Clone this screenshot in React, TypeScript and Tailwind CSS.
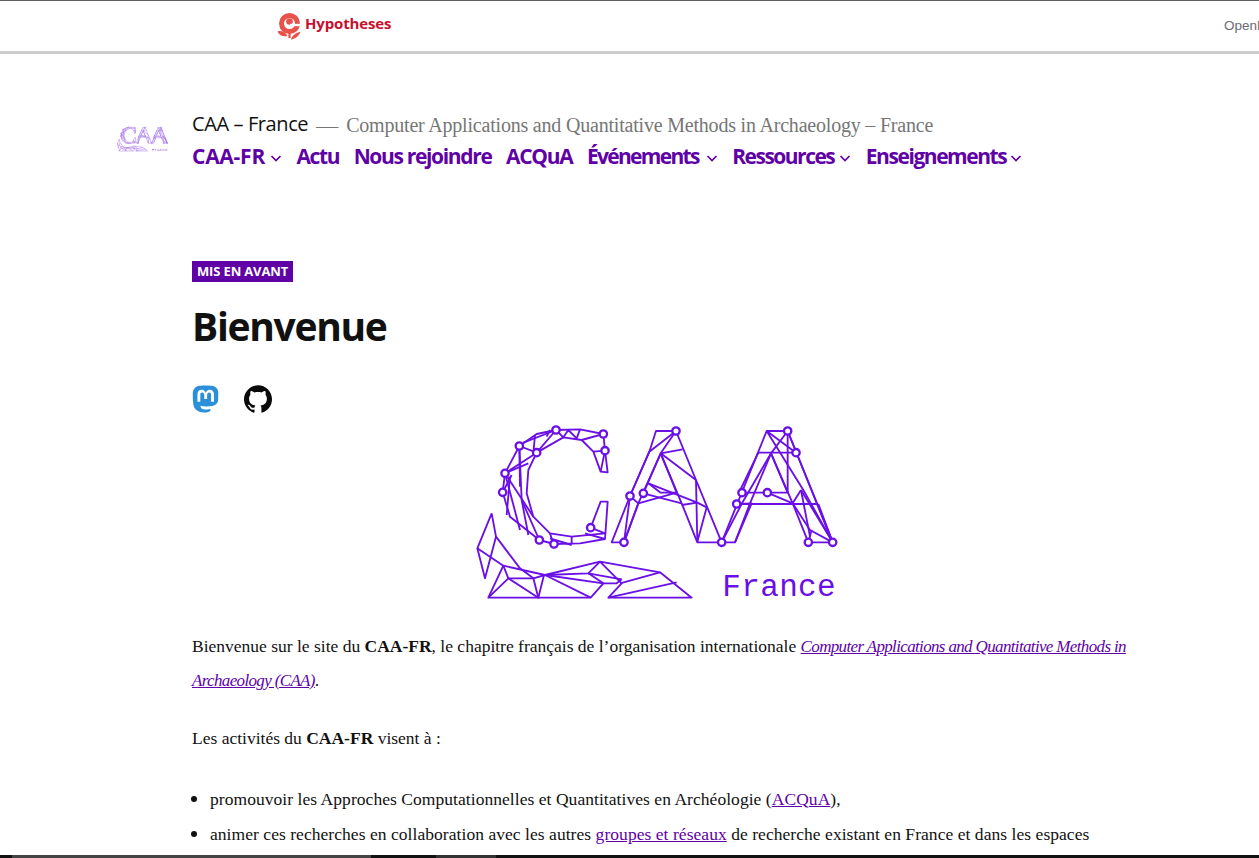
import React from "react";
import { SiMastodon, SiGithub } from "react-icons/si";

const lines: string[] = [
  // C outline
  "400,42 330,28 258,30 200,42 148,78 105,160 98,217 120,290 208,360 252,372 330,370 405,357 413,245 392,245 362,323",
  "400,42 405,92 413,157 392,155 370,95 335,60 280,52 200,98 175,150 170,220 190,290 240,340 305,350 405,340",
  "258,30 280,52 295,30 320,55 330,28", "258,30 200,98", "258,30 160,68", "230,50 240,30", "335,60 400,42", "370,95 405,92", "392,155 405,92",
  "148,78 200,98", "148,78 155,240 208,360", "195,45 190,100", "200,98 105,160", "105,160 175,130", "105,160 190,290", "105,160 150,330", "148,78 150,200",
  "98,217 125,165", "120,170 110,285", "155,240 175,345", "240,340 250,372", "240,355 305,375", "305,350 305,372", "345,340 405,357", "362,323 405,340",
  // lower shape
  "65,280 78,350 45,475 22,385 65,280", "22,385 100,437 225,465", "78,350 150,445", "100,437 55,533 362,533 400,490", "100,437 115,475 55,533",
  "115,475 205,533 222,465", "115,475 190,475 205,533", "150,445 190,475 225,465", "225,465 390,425 570,457 665,533 415,533 455,490 390,425",
  "225,465 355,460 390,425", "355,460 400,490 225,465", "225,465 362,533", "355,460 455,478", "400,490 440,490 455,478", "450,490 570,457", "415,533 620,487",
  // first A
  "462,367 425,367 480,228 538,95 558,33 618,33 678,180 755,367 682,367 635,250 572,100 505,250 462,367",
  "618,33 538,95 480,228 462,367", "618,33 572,100 520,220", "572,100 638,88", "572,100 678,180", "572,100 620,218", "535,190 572,218 620,218 505,250 480,228", "520,220 635,250",
  "535,190 682,248 635,255", "682,248 710,262 682,365", "678,180 682,365", "462,367 505,250",
  // second A
  "755,367 795,367 845,250 800,252", "755,367 890,33 953,33 1088,367 1015,367 968,250 903,100 840,250 795,367",
  "800,252 1045,252", "865,98 978,98", "953,33 903,100 816,250 755,367", "890,33 978,98", "890,33 1000,210 1088,367", "953,33 953,218 892,218 816,218", "903,100 953,218",
  "865,98 805,222", "892,218 968,250 1020,330 1088,367", "993,210 968,250", "993,210 1088,367", "993,210 1020,350", "1045,252 1088,367", "1015,367 1025,330", "953,33 1088,367",
];
const nodes = [
  [258,30],[400,42],[405,92],[148,78],[200,98],[105,160],[98,217],[362,323],[208,360],[252,372],
  [618,33],[480,228],[520,220],[462,367],[755,367],[953,33],[978,98],[816,218],[892,218],[800,252],[1015,367],[1088,367],
];

function CaaLogo({ className, color, width }: { className: string; color: string; width: number }) {
  return (
    <svg className={className} viewBox="0 0 1140 555" fill="none" stroke={color} strokeWidth={width} strokeLinejoin="round" aria-label="CAA France">
      {lines.map((p, i) => <polyline key={i} points={p} />)}
      {nodes.map(([x, y], i) => <circle key={i} cx={x} cy={y} r={11} fill="#fff" strokeWidth={width + 1.5} />)}
      <text x="757" y="527" fill={color} stroke="none" fontSize="93" textLength="340" fontFamily="'Liberation Mono', monospace">France</text>
    </svg>
  );
}

function Chevron({ gap }: { gap: string }) {
  return (
    <svg viewBox="0 0 12 12" className={`w-[12px] h-[12px] mt-[3px] ${gap}`} fill="none" stroke="#6001a5" strokeWidth="1.7">
      <path d="M1.5 4 L6 8.5 L10.5 4" />
    </svg>
  );
}

const menu: { label: string; track: string; drop: boolean; gap: string }[] = [
  { label: "CAA-FR", track: "tracking-[-0.25px]", drop: true, gap: "ml-[5px]" },
  { label: "Actu", track: "tracking-[-1.4px]", drop: false, gap: "" },
  { label: "Nous rejoindre", track: "tracking-[-1.33px]", drop: false, gap: "" },
  { label: "ACQuA", track: "tracking-[-1.3px]", drop: false, gap: "" },
  { label: "Événements", track: "tracking-[-1.7px]", drop: true, gap: "ml-[7px]" },
  { label: "Ressources", track: "tracking-[-1.5px]", drop: true, gap: "ml-[5px]" },
  { label: "Enseignements", track: "tracking-[-1.45px]", drop: true, gap: "ml-[4px]" },
];
const sans = "font-['Open_Sans','Noto_Sans',sans-serif]";

export default function App() {
  return (
    <div className="h-[858px] overflow-hidden flex flex-col bg-white text-[#111] font-['Liberation_Serif',serif]">
      <div className="h-[1px] bg-[#5f5f63]" />
      <div className="h-[50px] flex items-center justify-between pl-[277px] overflow-hidden">
        <div className="flex items-center gap-[4px]">
          <svg viewBox="0 0 24 27" className="w-[24px] h-[27px]">
            <circle cx="12.500" cy="10.500" r="10.500" fill="#e8524a" />
            <circle cx="12.500" cy="10.500" r="5.500" fill="#fff" />
            <circle cx="12.500" cy="8.500" r="3.300" fill="#e8524a" />
            <rect x="13" y="10.800" width="11" height="2.400" fill="#fff" />
            <rect x="11.400" y="18" width="2.200" height="7" fill="#e8524a" />
            <path fill="#e8524a" d="M0.500 18.500c3.500-1.200 8 .5 10 4.500-4 1-8 0-10-4.500zM23.500 19c-1.200 3.500-5 7-9.500 7.500 1-3.800 5-7 9.500-7.500z" />
          </svg>
          <span className={`${sans} text-[15px] font-bold tracking-[-0.15px] text-[#c8102e] -mt-[5px]`}>Hypotheses</span>
        </div>
        <span className="font-['Liberation_Sans',sans-serif] text-[13.500px] text-[#6b6b75] w-[35px] overflow-hidden">OpenEdition</span>
      </div>
      <div className="h-[3px] bg-[#cdcdcd]" />

      <header className="flex items-start pl-[116px] pt-[55px]">
        <CaaLogo className="w-[54px] h-[26px] mt-[17px] mr-[22px] shrink-0" color="#9a63e8" width={9} />
        <div>
          <div className="flex items-center h-[30px]">
            <span className={`${sans} text-[20px] tracking-[-0.4px] text-[#111]`}>CAA – France</span>
            <span className="text-[22px] text-[#767676] ml-[8px] mt-[2px]">—</span>
            <span className="text-[20px] text-[#767676] ml-[8px] mt-[2px] tracking-[-0.2px]">Computer Applications and Quantitative Methods in Archaeology – France</span>
          </div>
          <nav className={`${sans} flex items-center gap-[14.500px] mt-[3px]`}>
            {menu.map((m) => (
              <a key={m.label} className={`flex items-center text-[21px] leading-[28px] font-bold text-[#6001a5] ${m.track}`}>
                {m.label}
                {m.drop && <Chevron gap={m.gap} />}
              </a>
            ))}
          </nav>
        </div>
      </header>

      <main className="pl-[192px] pr-[119px] pt-[91px] flex-1 min-h-0">
        <span className={`${sans} inline-block bg-[#6001a5] text-white text-[13px] leading-[21px] font-bold px-[5px] tracking-[-0.15px] align-top`}>MIS EN AVANT</span>
        <h1 className={`${sans} text-[39px] leading-[50px] font-bold tracking-[-1.3px] text-[#111] mt-[16px]`}>Bienvenue</h1>
        <div className="flex items-center gap-[25px] mt-[34px]">
          <SiMastodon className="w-[27px] h-[28px] text-[#2b90d9]" />
          <SiGithub className="w-[28px] h-[28px] text-[#0a0a0a]" />
        </div>
        <div className="flex justify-center mt-[7px]">
          <CaaLogo className="w-[380px] h-[185px] ml-[-12px] shrink-0" color="#6a0fe6" width={5.5} />
        </div>
        <div className="text-[17.500px] leading-[33.500px] mt-[25px]">
          <p>
            Bienvenue sur le site du <b>CAA-FR</b>, le chapitre français de l’organisation internationale{" "}
            <a className="italic underline text-[#6001a5] text-[17px] tracking-[-0.65px]">Computer Applications and Quantitative Methods in Archaeology (CAA)</a>.
          </p>
          <p className="mt-[25px]">Les activités du <b>CAA-FR</b> visent à :</p>
          <ul className="mt-[26px] list-disc pl-[18px] flex flex-col gap-[1px] tracking-[0.05px] marker:text-[20px]">
            <li>promouvoir les Approches Computationnelles et Quantitatives en Archéologie (<a className="underline text-[#6001a5]">ACQuA</a>),</li>
            <li>animer ces recherches en collaboration avec les autres <a className="underline text-[#6001a5]">groupes et réseaux</a> de recherche existant en France et dans les espaces</li>
          </ul>
        </div>
      </main>
      <div className="h-[3px] bg-[#111] shrink-0 flex relative z-10">
        <div className="w-[12px]" />
        <div className="w-[359px] bg-[#444]" />
        <div className="w-[65px]" />
        <div className="w-[60px] bg-[#333]" />
      </div>
    </div>
  );
}
